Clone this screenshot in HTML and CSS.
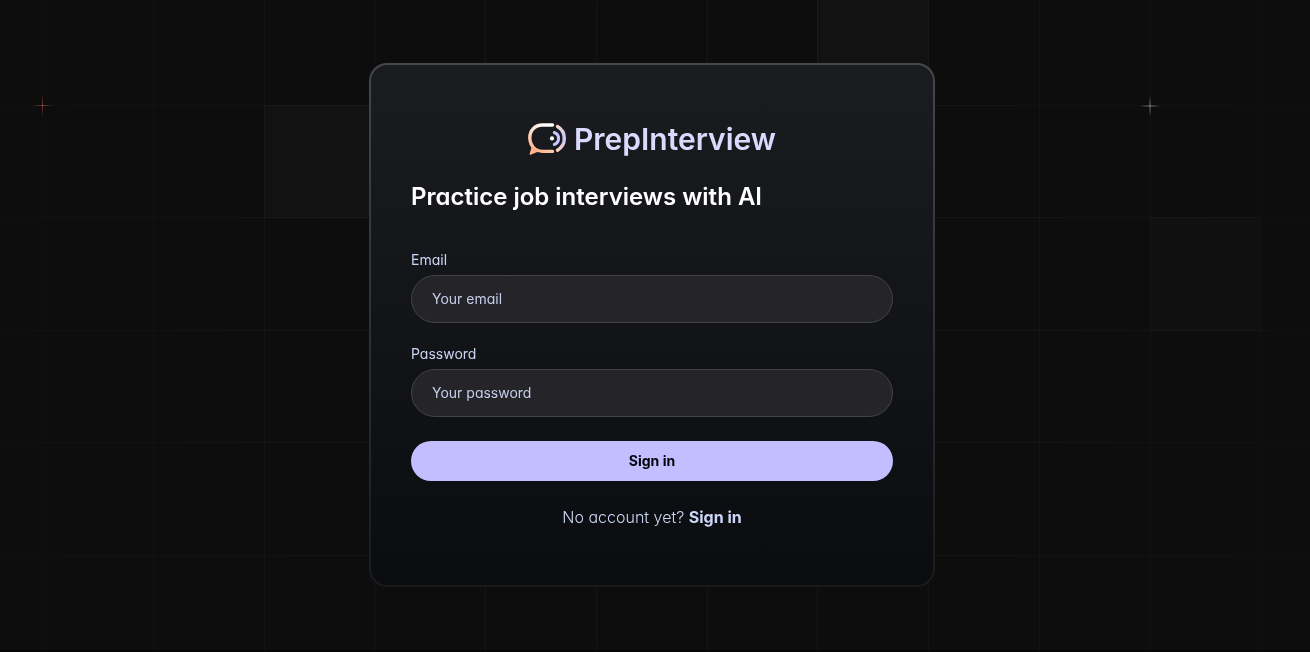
FILE: index.html
```html
<!DOCTYPE html>
<html lang="en">
<head>
<meta charset="utf-8">
<meta name="viewport" content="width=device-width, initial-scale=1">
<title>PrepInterview</title>
<link rel="stylesheet" href="styles.css">
</head>
<body>
<svg class="backdrop" viewBox="0 0 1310 652" preserveAspectRatio="xMidYMid slice" aria-hidden="true">
  <defs>
    <radialGradient id="fade" gradientUnits="userSpaceOnUse" cx="652" cy="326" r="700">
      <stop offset="0" stop-color="#fff" stop-opacity=".05"/>
      <stop offset=".5" stop-color="#fff" stop-opacity=".034"/>
      <stop offset="1" stop-color="#fff" stop-opacity=".014"/>
    </radialGradient>
    <radialGradient id="spark-red"><stop offset="0" stop-color="#b06450" stop-opacity=".6"/><stop offset="1" stop-color="#a03c2c" stop-opacity="0"/></radialGradient>
    <radialGradient id="spark-white"><stop offset="0" stop-color="#fff" stop-opacity=".4"/><stop offset="1" stop-color="#fff" stop-opacity="0"/></radialGradient>
  </defs>
  <g fill="#fff">
    <rect x="817" y="0" width="112" height="105" fill-opacity=".025"/>
    <rect x="264" y="105" width="111" height="113" fill-opacity=".025"/>
    <rect x="1150" y="217" width="111" height="114" fill-opacity=".017"/>
  </g>
  <path fill="url(#fade)" d="M42 0h1v652h-1zM153 0h1v652h-1zM264 0h1v652h-1zM374 0h1v652h-1zM485 0h1v652h-1zM596 0h1v652h-1zM707 0h1v652h-1zM817 0h1v652h-1zM928 0h1v652h-1zM1039 0h1v652h-1zM1150 0h1v652h-1zM1261 0h1v652h-1z"/>
  <path fill="url(#fade)" d="M0 105h1310v1H0zM0 217h1310v1H0zM0 330h1310v1H0zM0 442h1310v1H0zM0 555h1310v1H0z"/>
  <path fill="#000" fill-opacity=".4" d="M0 650h1310v2H0z"/>
  <g fill="url(#spark-red)"><rect x="31" y="105" width="23" height="1"/><rect x="42" y="94" width="1" height="24"/></g>
  <g fill="url(#spark-white)"><rect x="1138" y="105" width="24" height="2"/><rect x="1149" y="94" width="2" height="24"/></g>
</svg>
<main class="page">
  <div class="card">
    <div class="brand">
      <svg class="brand-icon" viewBox="0 0 38 32" fill="none" stroke-linecap="round" aria-hidden="true">
        <defs>
          <linearGradient id="bubble" gradientUnits="userSpaceOnUse" x1="19" y1="1" x2="5" y2="27"><stop stop-color="#fff"/><stop offset="1" stop-color="#ffb38a"/></linearGradient>
          <linearGradient id="wave" gradientUnits="userSpaceOnUse" x1="28" y1="5" x2="37" y2="14"><stop stop-color="#f5d5c8"/><stop offset="1" stop-color="#cac5fe"/></linearGradient>
          <linearGradient id="wave-end" gradientUnits="userSpaceOnUse" x1="37" y1="16" x2="29" y2="28"><stop stop-color="#cac5fe"/><stop offset="1" stop-color="#ffd1b9"/></linearGradient>
        </defs>
        <path d="M24.500 2H14.500C7 2 1.800 7.500 1.800 14.700c0 5 2 8.500 5.200 11.300 2.200 1.700 4.700 2.400 7.500 2.400h10" stroke="url(#bubble)" stroke-width="3.400"/>
        <path d="M4.400 24.200 2.400 30.900 9.600 28z" stroke="#ffb38a" stroke-width="1.600" stroke-linejoin="round" fill="#ffb38a"/>
        <path d="M29.500 3.500c4.500 2.500 6.800 6.800 6.800 12" stroke="url(#wave)" stroke-width="3.400" stroke-linecap="round"/>
        <path d="M36.300 15.500c0 4.700-2.300 9-6.800 11.700" stroke="url(#wave-end)" stroke-width="3.400"/>
        <path d="M26.300 9.500c5.700 2 5.700 10 0 12" stroke="#cac5fe" stroke-width="3"/>
        <circle cx="24" cy="15.400" r="2.100" fill="#fff"/>
      </svg>
      <h2 class="brand-name">PrepInterview</h2>
    </div>
    <h1 class="title">Practice job interviews with AI</h1>
    <form class="form">
      <div class="field">
        <label class="label" for="email">Email</label>
        <input class="input" id="email" type="email" placeholder="Your email">
      </div>
      <div class="field">
        <label class="label" for="password">Password</label>
        <input class="input" id="password" type="password" placeholder="Your password">
      </div>
      <button class="submit" type="submit">Sign in</button>
    </form>
    <p class="footer">No account yet? <a class="link" href="#">Sign in</a></p>
  </div>
</main>
</body>
</html>
```
FILE: styles.css
```css
* { box-sizing: border-box; }

body {
  margin: 0;
  background: #0d0d0d;
  color: #ccd6f6;
  font-family: Inter, "Liberation Sans", sans-serif;
  font-feature-settings: "cv11" 1;
}

.backdrop {
  position: fixed;
  inset: 0;
  width: 100%;
  height: 100%;
}

.page {
  position: relative;
  display: flex;
  align-items: center;
  justify-content: center;
  min-height: 100vh;
  padding: 0 6px 2px 0;
}

.card {
  width: 100%;
  max-width: 566px;
  padding: 56px 40px;
  border: 2px solid transparent;
  border-radius: 18px;
  background:
    linear-gradient(#1a1c20, #0b0c0f) padding-box,
    linear-gradient(#464749, #191a1a) border-box;
}

.brand {
  display: flex;
  align-items: center;
  justify-content: center;
  gap: 8px;
}

.brand-icon { width: 38px; height: 32px; }

.brand-name {
  margin: 0;
  color: #dadaff;
  font-size: 30px;
  font-weight: 600;
  line-height: 36px;
}

.title {
  margin: 24px 0 36px;
  color: #fff;
  font-size: 24px;
  font-weight: 600;
  line-height: 32px;
}

.form {
  display: flex;
  flex-direction: column;
  gap: 20px;
}

.field {
  display: flex;
  flex-direction: column;
  gap: 4px;
}

.label {
  font-size: 14px;
  line-height: 22px;
}

.input {
  width: 100%;
  height: 48px;
  padding: 0 20px 2px;
  border: 1px solid #424348;
  border-radius: 24px;
  background: #242429;
  color: #ccd6f6;
  font: inherit;
  font-feature-settings: inherit;
  font-size: 14px;
}

.input::placeholder { color: #c4cdec; opacity: 1; }

.submit {
  height: 40px;
  margin-top: 4px;
  padding: 0 0 2px;
  border: 0;
  border-radius: 20px;
  background: #c3beff;
  color: #020408;
  font: inherit;
  font-size: 14px;
  font-weight: 700;
}

.footer {
  margin: 24px 0 0;
  font-size: 16px;
  font-weight: 300;
  line-height: 24px;
  text-align: center;
}

.link {
  color: inherit;
  font-weight: 700;
  text-decoration: none;
}
```
